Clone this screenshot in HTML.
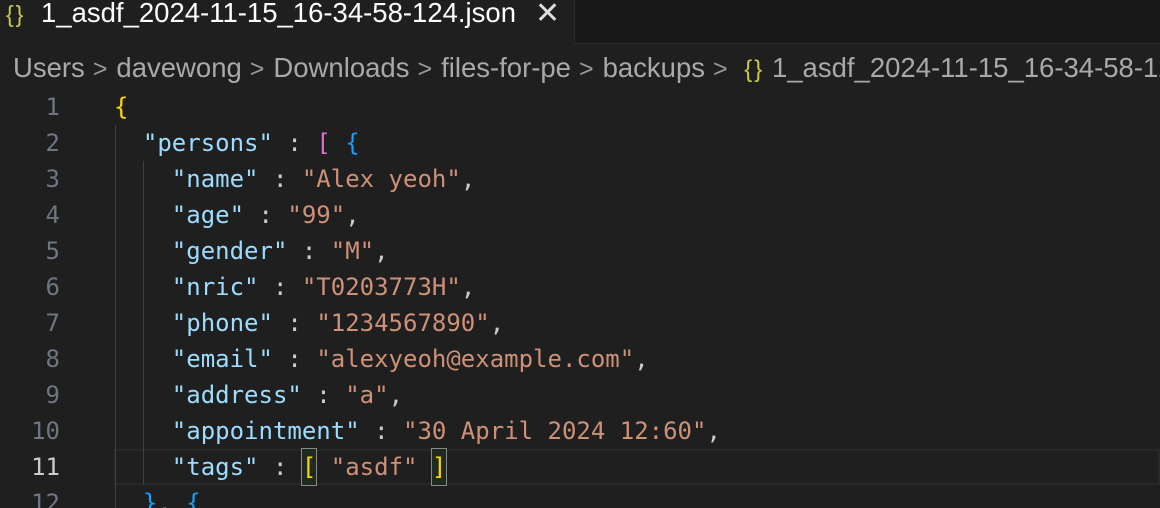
<!DOCTYPE html>
<html><head><style>
html,body{margin:0;width:1160px;height:508px;overflow:hidden}
body{background:#1f1f1f;position:relative;font-family:"Liberation Sans",sans-serif}
.tabbar{position:absolute;left:0;top:0;width:1160px;height:44px;background:#181818;border-bottom:1px solid #2b2b2b;box-sizing:border-box}
.tab{position:absolute;left:0;top:0;width:575px;height:45px;background:#1f1f1f;border-right:1px solid #2b2b2b;box-sizing:border-box}
.tab .ic{position:absolute;left:6px;top:1px;color:#cbcb41;font-size:23px;letter-spacing:2px}
.tab .t{position:absolute;left:41px;top:-2px;color:#fff;font-size:27.5px;line-height:30px}
.tab .x{position:absolute;left:535px;top:-4px;color:#ddd;font-size:30px;font-weight:100}
.bc{position:absolute;left:13px;top:52px;width:1147px;overflow:hidden;color:#a9a9a9;font-size:27.5px;line-height:32px;white-space:nowrap}
.bc .s{color:#999;margin:0 9px 0 8px;font-size:25px}
.bc .j{color:#cbcb41;font-size:24px;letter-spacing:2px}
.code{position:absolute;left:0;top:89px;font-family:"DejaVu Sans Mono",monospace;font-size:24px;}
.ln{position:absolute;left:0;width:60px;text-align:right;color:#6e7681;height:36px;line-height:36px}
.l{position:absolute;left:114px;height:36px;line-height:36px;white-space:pre;color:#ccc}
.k{color:#9cdcfe}.v{color:#ce9178}.y{color:#ffd700}.p{color:#da70d6}.b{color:#179fff}
.g{position:absolute;width:1px;background:#404040}
.cur{position:absolute;left:114px;top:449px;width:1046px;height:36px;border:2px solid #282828;box-sizing:border-box}
.bm{display:inline-block;outline:1px solid #888;background:#1f2a20}
</style></head><body>
<div class="tabbar"></div>
<div class="tab"><span class="ic">{}</span><span class="t">1_asdf_2024-11-15_16-34-58-124.json</span><span class="x">✕</span></div>
<div class="bc">Users<span class="s">&gt;</span>davewong<span class="s">&gt;</span>Downloads<span class="s">&gt;</span>files-for-pe<span class="s">&gt;</span>backups<span class="s">&gt;</span> <span class="j">{}</span> 1_asdf_2024-11-15_16-34-58-124.json</div>
<div class="cur"></div>
<div class="g" style="left:115px;top:125px;height:383px"></div>
<div class="g" style="left:143px;top:161px;height:324px"></div>
<div class="code">
<div class="ln" style="top:0">1</div><div class="l" style="top:0"><span class="y">{</span></div>
<div class="ln" style="top:36px">2</div><div class="l" style="top:36px">  <span class="k">"persons"</span> : <span class="p">[</span> <span class="b">{</span></div>
<div class="ln" style="top:72px">3</div><div class="l" style="top:72px">    <span class="k">"name"</span> : <span class="v">"Alex yeoh"</span>,</div>
<div class="ln" style="top:108px">4</div><div class="l" style="top:108px">    <span class="k">"age"</span> : <span class="v">"99"</span>,</div>
<div class="ln" style="top:144px">5</div><div class="l" style="top:144px">    <span class="k">"gender"</span> : <span class="v">"M"</span>,</div>
<div class="ln" style="top:180px">6</div><div class="l" style="top:180px">    <span class="k">"nric"</span> : <span class="v">"T0203773H"</span>,</div>
<div class="ln" style="top:216px">7</div><div class="l" style="top:216px">    <span class="k">"phone"</span> : <span class="v">"1234567890"</span>,</div>
<div class="ln" style="top:252px">8</div><div class="l" style="top:252px">    <span class="k">"email"</span> : <span class="v">"alexyeoh@example.com"</span>,</div>
<div class="ln" style="top:288px">9</div><div class="l" style="top:288px">    <span class="k">"address"</span> : <span class="v">"a"</span>,</div>
<div class="ln" style="top:324px">10</div><div class="l" style="top:324px">    <span class="k">"appointment"</span> : <span class="v">"30 April 2024 12:60"</span>,</div>
<div class="ln" style="top:360px;color:#ccc">11</div><div class="l" style="top:360px">    <span class="k">"tags"</span> : <span class="y bm">[</span> <span class="v">"asdf"</span> <span class="y bm">]</span></div>
<div class="ln" style="top:396px">12</div><div class="l" style="top:396px">  <span class="b">}</span>, <span class="b">{</span></div>
</div>
</body></html>
